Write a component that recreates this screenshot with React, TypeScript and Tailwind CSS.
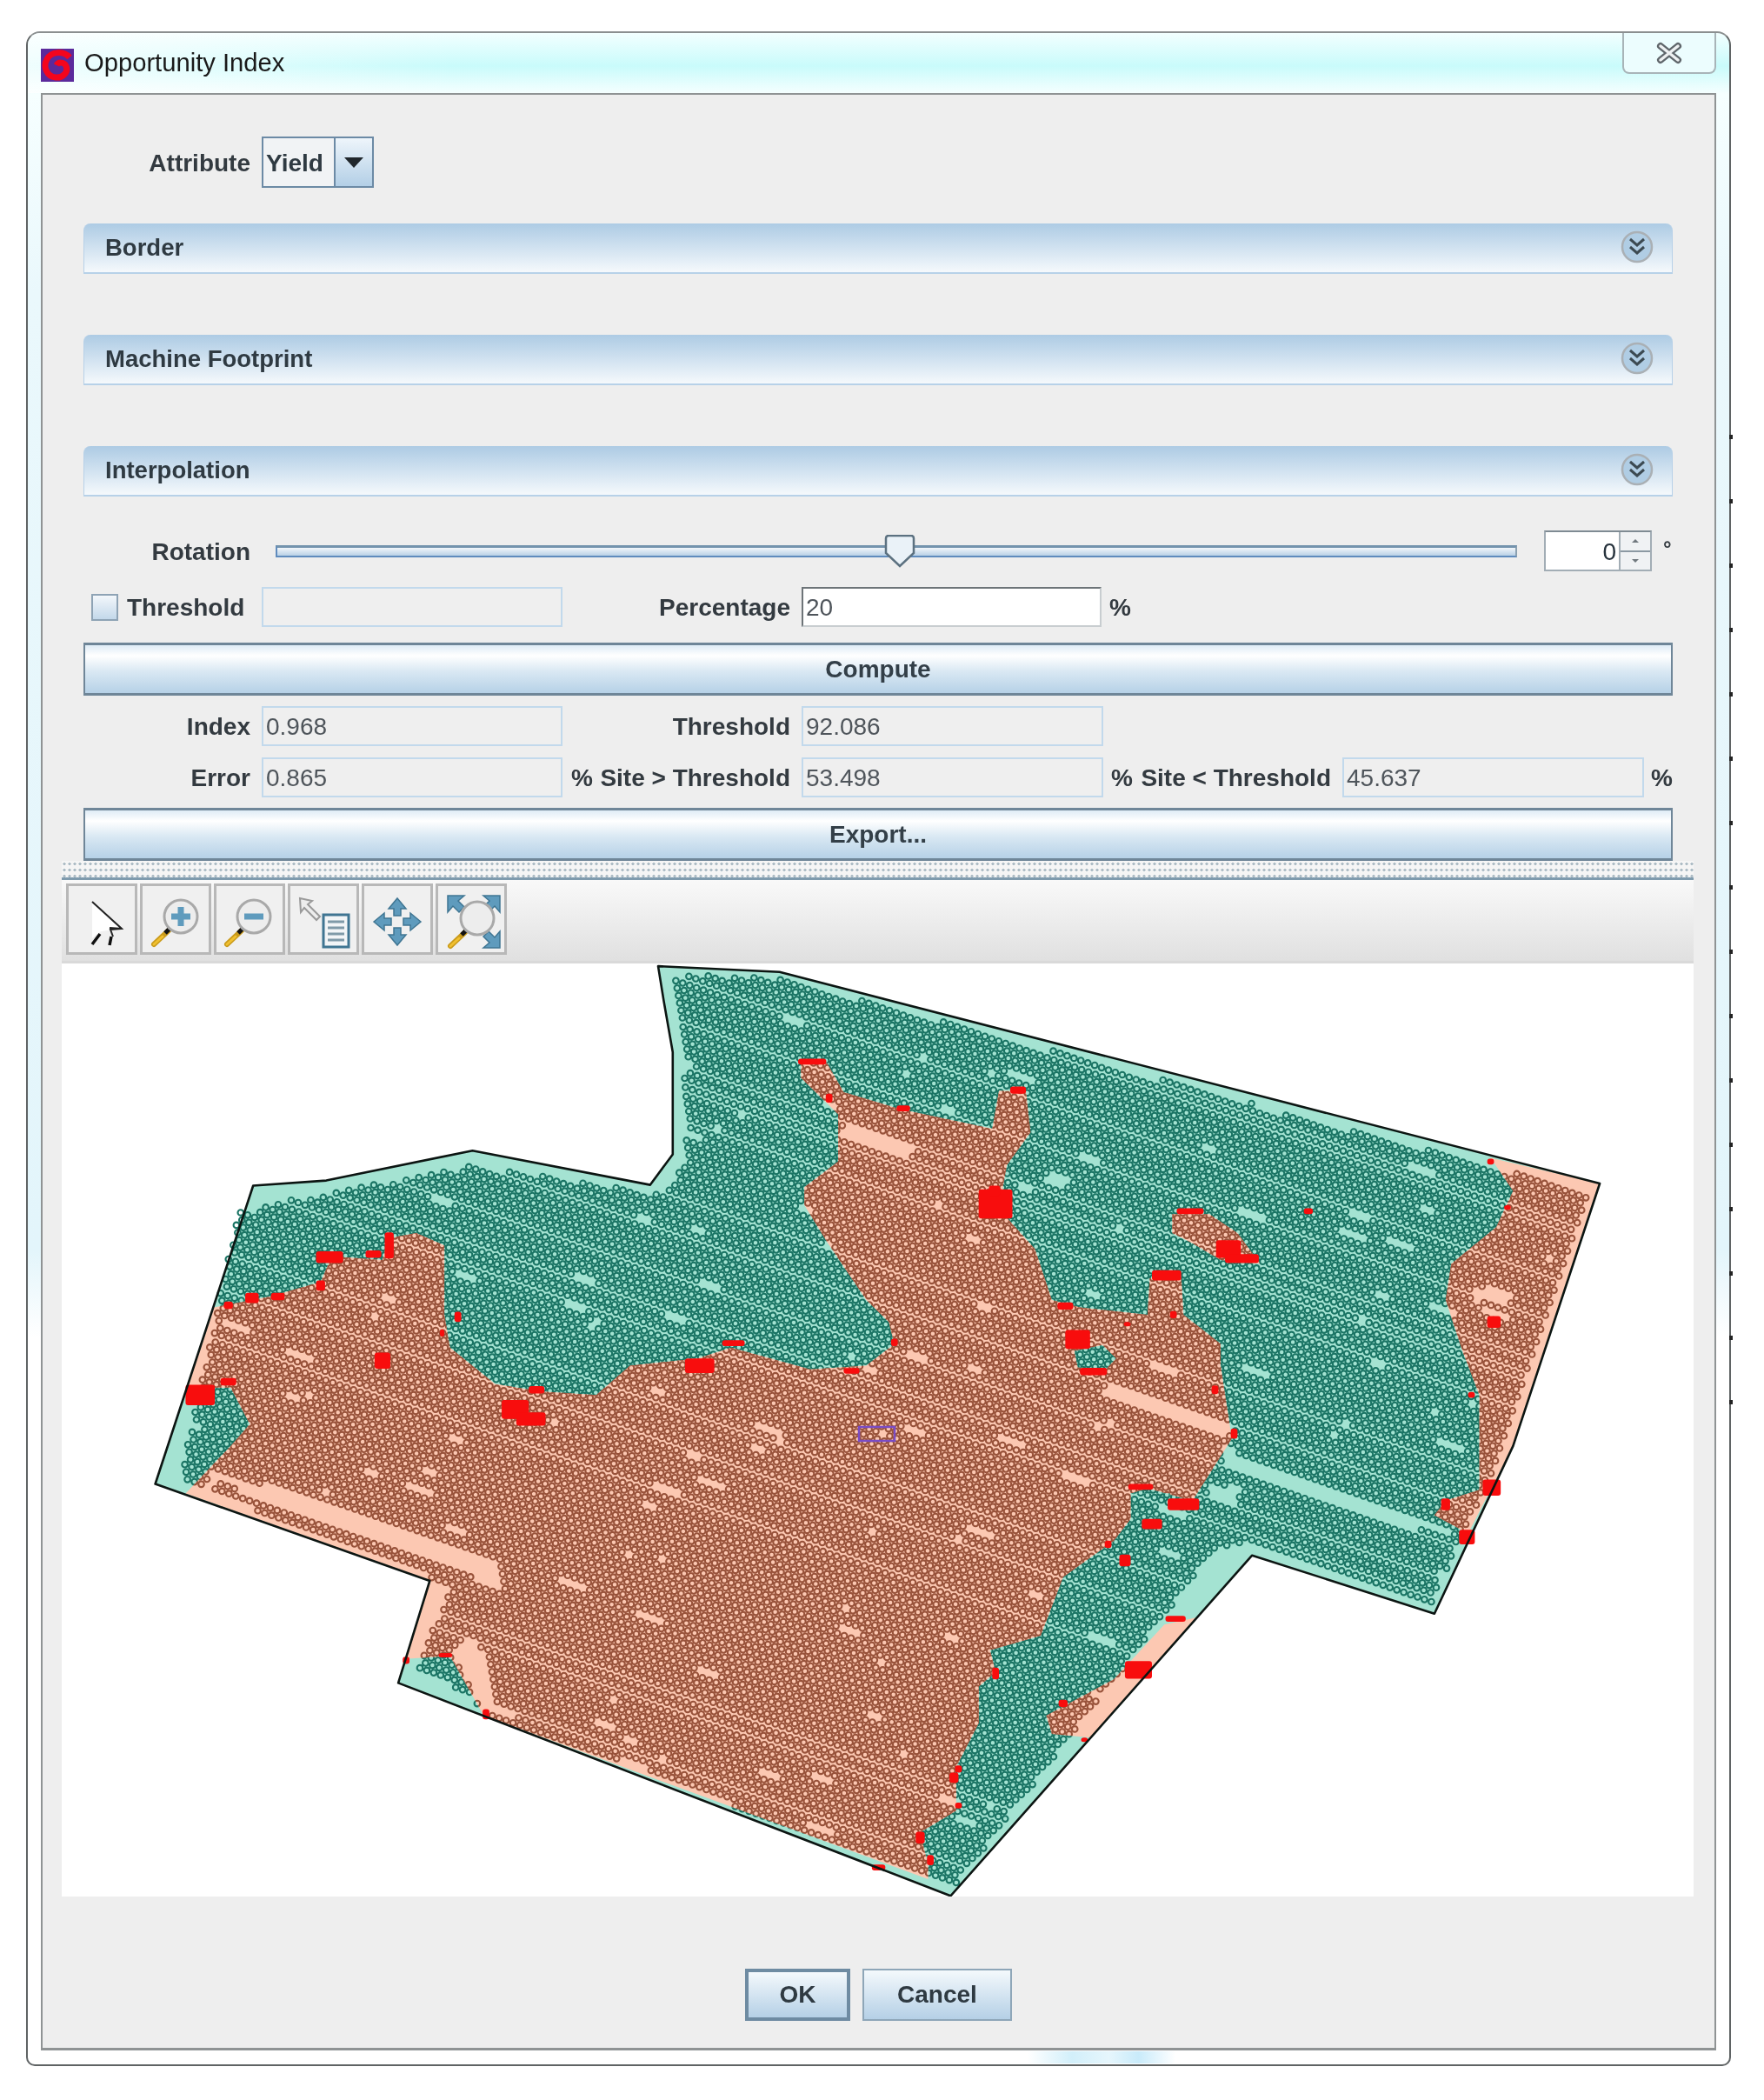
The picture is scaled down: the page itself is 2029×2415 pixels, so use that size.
import { ReactNode } from "react";

const FONT = "font-['Liberation_Sans',Arial,sans-serif]";

// map outlines are traced from the screenshot, Z converts them to page pixels
type Pt = number[];
const toPage = (p: Pt) => [p[0] * 1.294, 1100 + p[1] * 0.8386];
const Z = (pts: Pt[]) => pts.map(toPage).map((p) => `${p[0].toFixed(1)},${p[1].toFixed(1)}`).join(" ");

const FIELD: Pt[] = [[585, 12], [693, 20], [1422, 310], [1345, 670], [1275, 900], [1113, 820], [845, 1287], [354, 995], [382, 855], [138, 722], [225, 313], [290, 306], [420, 265], [578, 312], [598, 270], [598, 130], [590, 60]];
const INNER: Pt[] = [[600, 24], [690, 28], [1345, 295], [1414, 322], [1338, 665], [1272, 890], [1108, 805], [1080, 812], [848, 1275], [435, 1040], [410, 1005], [372, 975], [400, 860], [160, 718], [212, 345], [290, 325], [420, 285], [585, 325], [610, 285], [608, 130]];
const SALMON: Pt[][] = [
  [[430, 1040], [825, 1264], [825, 1245], [818, 1200], [850, 1170], [850, 1110], [870, 1050], [870, 1000], [885, 980], [880, 950], [925, 930], [945, 850], [990, 800], [1005, 770], [1005, 735], [1020, 728], [1060, 745], [1095, 660], [1085, 560], [1085, 530], [1052, 490], [1050, 440], [1022, 440], [1020, 490], [960, 480], [935, 470], [920, 400], [888, 345], [895, 285], [916, 240], [912, 183], [888, 183], [882, 235], [800, 208], [750, 185], [735, 145], [712, 143], [712, 165], [745, 215], [745, 280], [715, 315], [715, 340], [735, 390], [770, 470], [790, 500], [795, 530], [770, 560], [720, 565], [650, 535], [620, 550], [560, 560], [530, 600], [480, 595], [440, 585], [400, 535], [395, 490], [395, 395], [370, 378], [345, 385], [340, 415], [295, 410], [285, 445], [240, 465], [190, 480], [166, 590], [205, 590], [222, 640], [205, 670], [165, 735], [382, 855], [360, 962], [400, 958]],
  [[1325, 275], [1422, 310], [1345, 670], [1305, 790], [1275, 765], [1285, 745], [1315, 730], [1315, 600], [1300, 540], [1285, 470], [1290, 420], [1330, 370], [1345, 320]],
  [[1064, 905], [969, 1070], [935, 1065], [930, 1040], [990, 990], [1035, 915]],
  [[1042, 352], [1075, 352], [1100, 378], [1120, 420], [1085, 415], [1060, 392], [1042, 378]],
];
const ISLANDS: Pt[][] = [
  [[955, 540], [980, 532], [992, 550], [982, 566], [958, 562]],
  [[1005, 735], [1040, 735], [1036, 770], [1012, 762]],
];
// bare strips the harvester left, no dots in there
const BARE: Pt[][] = [
  [[755, 232], [815, 262], [808, 272], [750, 244]],
  [[985, 585], [1095, 640], [1088, 655], [980, 600]],
  [[190, 700], [440, 830], [450, 870], [420, 850], [185, 715]],
  [[400, 950], [425, 930], [440, 1030], [430, 1035]],
  [[1310, 450], [1345, 455], [1340, 475], [1310, 470]],
  [[1090, 680], [1290, 780], [1285, 795], [1085, 700]],
];
// red cells: centre x, centre y, w, h
const RED: number[][] = [[722, 143, 25, 8], [737, 193, 6, 12], [803, 207, 12, 8], [905, 182, 14, 10], [885, 338, 30, 40], [884, 320, 10, 14], [1058, 348, 24, 8], [1163, 348, 8, 8], [1092, 400, 22, 24], [1104, 413, 30, 12], [1037, 436, 26, 14], [947, 478, 14, 10], [1043, 490, 6, 10], [1002, 503, 6, 6], [958, 524, 22, 26], [972, 568, 24, 10], [1080, 593, 6, 12], [1097, 653, 6, 14], [1014, 726, 22, 8], [1052, 750, 28, 16], [1024, 777, 18, 14], [985, 805, 6, 10], [1000, 827, 10, 16], [1045, 907, 18, 8], [885, 982, 6, 16], [1012, 977, 24, 24], [945, 1023, 8, 10], [964, 1073, 6, 6], [852, 1113, 6, 10], [848, 1125, 8, 14], [852, 1163, 6, 8], [818, 1207, 8, 16], [827, 1238, 6, 14], [781, 1248, 12, 8], [432, 1038, 6, 14], [396, 957, 12, 6], [361, 964, 6, 10], [203, 477, 8, 10], [224, 467, 12, 14], [247, 465, 12, 10], [293, 411, 24, 16], [285, 450, 8, 14], [332, 407, 14, 10], [346, 395, 8, 36], [407, 493, 6, 14], [393, 515, 4, 10], [340, 553, 14, 22], [178, 600, 26, 28], [203, 582, 14, 10], [458, 620, 24, 26], [472, 633, 26, 18], [477, 593, 14, 10], [622, 560, 26, 20], [652, 529, 20, 8], [757, 567, 14, 8], [795, 528, 6, 10], [1325, 280, 6, 8], [1340, 343, 6, 6], [1328, 500, 12, 16], [1308, 600, 6, 8], [1326, 727, 16, 22], [1285, 750, 8, 16], [1304, 795, 14, 20]];

const inside = (x: number, y: number, poly: number[][]) => {
  let hit = false;
  for (let i = 0, j = poly.length - 1; i < poly.length; j = i++) {
    const [xi, yi] = poly[i];
    const [xj, yj] = poly[j];
    if (yi > y !== yj > y && x < ((xj - xi) * (y - yi)) / (yj - yi) + xi) hit = !hit;
  }
  return hit;
};

// harvest points: tilted rows with short gaps, seeded so it draws the same every time
const buildDots = () => {
  const inner = INNER.map(toPage);
  const bare = BARE.map((b) => b.map(toPage));
  let seed = 11;
  const rand = () => {
    seed = (seed * 16807) % 2147483647;
    return seed / 2147483647;
  };
  // small holes, bigger in the south east where the teal looks patchy
  const holes: number[][] = [];
  for (let i = 0; i < 110; i++) {
    const x = 200 + rand() * 1650;
    const y = 1110 + rand() * 1060;
    holes.push([x, y, 3 + rand() * (x > 1150 && y > 1700 ? 16 : 4)]);
  }
  const angle = (19 * Math.PI) / 180;
  const cos = Math.cos(angle);
  const sin = Math.sin(angle);
  let d = "";
  let v = -900;
  let row = 0;
  while (v < 900) {
    let skip = 0;
    const start = row % 2 ? 4.2 : 0;
    for (let u = -1100 + start; u < 1100; u += 8.4) {
      if (skip > 0) {
        skip--;
        continue;
      }
      if (rand() < 0.005) {
        skip = 1 + Math.floor(rand() * 3);
        continue;
      }
      const x = 1000 + u * cos - v * sin;
      const y = 1640 + u * sin + v * cos;
      if (!inside(x, y, inner)) continue;
      if (holes.some((h) => Math.abs(x - h[0]) < h[2] && Math.abs(y - h[1]) < h[2] * 0.6)) continue;
      if (bare.some((b) => inside(x, y, b))) continue;
      d += `M${(x - 3.3).toFixed(1)} ${y.toFixed(1)}a3.3 3.3 0 1 0 6.6 0a3.3 3.3 0 1 0-6.6 0`;
    }
    v += rand() < 0.12 ? 9.6 : 7.6;
    row++;
  }
  return d;
};
const DOTS = buildDots();

function FieldMap() {
  return (
    <svg viewBox="71 1107 1877 1073" className="block w-[1877px] h-[1073px] bg-white">
      <defs>
        <path id="dots" d={DOTS} />
        <clipPath id="salmon-clip">
          {SALMON.map((p, i) => (
            <polygon key={i} points={Z(p)} />
          ))}
        </clipPath>
        <clipPath id="island-clip">
          {ISLANDS.map((p, i) => (
            <polygon key={i} points={Z(p)} />
          ))}
        </clipPath>
      </defs>
      <polygon points={Z(FIELD)} fill="#a4e3d2" />
      <use href="#dots" fill="none" stroke="#1a7464" strokeWidth="2.1" />
      <g clipPath="url(#salmon-clip)">
        <polygon points={Z(FIELD)} fill="#fcc8b2" />
        <use href="#dots" fill="none" stroke="#98523a" strokeWidth="2.1" />
      </g>
      <g clipPath="url(#island-clip)">
        <polygon points={Z(FIELD)} fill="#a4e3d2" />
        <use href="#dots" fill="none" stroke="#1a7464" strokeWidth="2.1" />
      </g>
      {RED.map(([x, y, w, h], i) => {
        const [px, py] = toPage([x, y]);
        return <rect key={i} x={px - w * 0.65} y={py - h * 0.42} width={w * 1.294} height={h * 0.84} rx="3" fill="#f80d0d" />;
      })}
      <polygon points={Z(FIELD)} fill="none" stroke="#0c1512" strokeWidth="2.6" strokeLinejoin="round" />
      <rect x="988" y="1640" width="41" height="16" fill="none" stroke="#7a4cc4" strokeWidth="2.5" />
    </svg>
  );
}

function Label({ w, children, className = "" }: { w: string; children: ReactNode; className?: string }) {
  return <div className={`${w} shrink-0 pt-[2px] text-right text-[28px] leading-none font-bold text-[#333a40] ${className}`}>{children}</div>;
}

function ReadOnly({ w, value }: { w: string; value?: string }) {
  return (
    <div className={`${w} shrink-0 h-[46px] flex items-center pl-[3px] pt-[2px] border-2 border-[#c2d9ec] bg-[#efefef] text-[28px] leading-none text-[#4f555b]`}>
      {value}
    </div>
  );
}

function Section({ title }: { title: string }) {
  return (
    <div className="h-[58px] flex items-center justify-between pl-[24px] pr-[21px] rounded-t-[8px] border-b-2 border-x border-[#b7d1e8] bg-gradient-to-b from-[#adcbe4] to-[#f5f9fc]">
      <span className="text-[27.5px] leading-none font-bold text-[#2f3a42]">{title}</span>
      <svg viewBox="0 0 38 38" className="w-[38px] h-[38px] -mt-[2px]">
        <circle cx="19" cy="19" r="17" fill="#b0cde4" stroke="#aab0b5" strokeWidth="2.5" />
        <path d="M11 10l8 7 8-7M11 19l8 7 8-7" fill="none" stroke="#3c4a52" strokeWidth="3" />
      </svg>
    </div>
  );
}

function WideButton({ children }: { children: ReactNode }) {
  return (
    <div className="h-[61px] flex items-center justify-center border-2 border-t-[3px] border-b-[3px] border-[#6f8698] bg-[linear-gradient(to_bottom,#dfecf6,#ffffff_22%,#d9e8f3_55%,#b6d1e7)] text-[28px] leading-none font-bold text-[#333f48]">
      {children}
    </div>
  );
}

function ToolButton({ children }: { children: ReactNode }) {
  return (
    <div className="w-[82px] h-[82px] border-[3px] border-[#b8b8b8] bg-[#f0f0f0]">
      <svg viewBox="3 3 76 76" className="w-[76px] h-[76px]">
        {children}
      </svg>
    </div>
  );
}

const BLUE = "#5f9bbd";
const DARK_BLUE = "#3f7592";

function Lens({ cx, cy, children }: { cx: number; cy: number; children?: ReactNode }) {
  return (
    <g>
      <path d={`M${cx - 14} ${cy + 16}L${cx - 31} ${cy + 32}`} stroke="#c99a1a" strokeWidth="6" strokeLinecap="round" />
      <path d={`M${cx - 21} ${cy + 23}L${cx - 31} ${cy + 32}`} stroke="#f0c030" strokeWidth="3" strokeLinecap="round" />
      <path d={`M${cx - 13} ${cy + 14}L${cx - 18} ${cy + 19}`} stroke="#111" strokeWidth="5" />
      <circle cx={cx} cy={cy} r="19" fill="#ededed" stroke="#a9a9a9" strokeWidth="3" />
      {children}
    </g>
  );
}

function App() {
  return (
    <div className={`relative w-[2029px] h-[2415px] bg-white pt-[36px] pl-[30px] blur-[0.6px] ${FONT}`}>
      <div className="relative w-[1961px] h-[2340px] flex flex-col rounded-t-[16px] rounded-b-[10px] border-2 border-[#5f6364] border-t-[#8b8f90] bg-[linear-gradient(to_bottom,#f2ffff_0,#c9fbfb_38px,#f6ffff_70px,#eaf8fc_300px,#e3f5fb_1400px,#ffffff_1500px)]">
        {/* title bar */}
        <div className="h-[69px] shrink-0 relative flex items-center pl-[15px] rounded-tl-[14px] bg-gradient-to-r from-white/70 to-transparent to-[25%]">
          <svg viewBox="0 0 38 38" className="w-[38px] h-[38px] mt-[4px]">
            <rect width="38" height="38" fill="#5b2a9c" />
            <path d="M33 10C26 2 12 3 7 12c-5 9 0 20 10 21 8 1 15-6 12-13-2-5-9-5-11-1" fill="none" stroke="#f4051d" strokeWidth="7" />
          </svg>
          <span className="ml-[12px] text-[29.2px] leading-none text-[#1a1a1a]">Opportunity Index</span>
          <div className="absolute top-0 right-[15px] w-[108px] h-[47px] rounded-b-[8px] border-x-2 border-b-2 border-[#a8b4b8] bg-[#ecfdfe] flex items-center justify-center">
            <svg viewBox="0 0 34 26" className="w-[34px] h-[26px]">
              <path d="M7 5l20 16M27 5L7 21" stroke="#5f666b" strokeWidth="8" strokeLinecap="round" />
              <path d="M7 5l20 16M27 5L7 21" stroke="#eef1f2" strokeWidth="3.5" strokeLinecap="round" />
            </svg>
          </div>
        </div>

        {/* content panel */}
        <div className="flex-1 mx-[15px] mb-[16px] border-2 border-[#8f9394] border-b-[3px] bg-[#eeeeee] flex flex-col">
          <div className="pl-[47px] pr-[48px] flex flex-col">
            <div className="mt-[48px] h-[59px] flex items-center">
              <Label w="w-[192px]">Attribute</Label>
              <div className="ml-[13px] h-[59px] w-[129px] flex border-2 border-[#6c8aa5]">
                <div className="w-[81px] bg-[#f1f3f5] flex items-center pl-[3px] pt-[2px] text-[28px] leading-none font-bold text-[#2f3a42]">Yield</div>
                <div className="flex-1 border-l-2 border-[#6c8aa5] bg-gradient-to-b from-[#eef5fb] to-[#b3cfe6] flex items-center justify-center">
                  <div className="w-0 h-0 border-x-[11px] border-x-transparent border-t-[12px] border-t-[#20272c]" />
                </div>
              </div>
            </div>

            <div className="mt-[41px] flex flex-col gap-[70px]">
              <Section title="Border" />
              <Section title="Machine Footprint" />
              <Section title="Interpolation" />
            </div>

            {/* rotation */}
            <div className="mt-[39px] h-[47px] flex items-center">
              <Label w="w-[192px]">Rotation</Label>
              <div className="relative ml-[29px] w-[1428px] h-[14px] border-2 border-[#5f8bbd] border-r-[#8ba0b0] border-t-[3px] border-t-[#7393ad] bg-gradient-to-b from-[#f2f6fa] to-[#b9d1e6]">
                <svg viewBox="0 0 36 38" className="absolute left-[698px] -top-[15px] w-[36px] h-[38px]">
                  <path d="M2 4q0-3 3-3h26q3 0 3 3v17L18 36 2 21z" fill="#eaf2f8" stroke="#5c7180" strokeWidth="2.5" />
                </svg>
              </div>
              <div className="ml-[31px] w-[124px] h-[47px] flex border-2 border-[#a2adb5] border-t-[#7f8b93] bg-white">
                <div className="flex-1 flex items-center justify-end pr-[3px] pt-[2px] text-[28px] leading-none text-[#26323c]">0</div>
                <div className="w-[36px] flex flex-col border-l-2 border-[#a2adb5] bg-[#f0f2f4]">
                  <div className="flex-1 flex items-center justify-center border-b-2 border-[#8c99a3]">
                    <div className="w-0 h-0 border-x-[4px] border-x-transparent border-b-[4px] border-b-[#70787e]" />
                  </div>
                  <div className="flex-1 flex items-center justify-center">
                    <div className="w-0 h-0 border-x-[4px] border-x-transparent border-t-[4px] border-t-[#70787e]" />
                  </div>
                </div>
              </div>
              <div className="ml-[13px] -mt-[6px] text-[24px] leading-none font-bold text-[#333a40]">°</div>
            </div>

            {/* threshold */}
            <div className="mt-[18px] h-[46px] flex items-center">
              <div className="ml-[9px] w-[31px] h-[31px] border-2 border-[#8ea3b5] bg-gradient-to-b from-[#f3f7fb] to-[#c3d8ea]" />
              <Label w="w-[129px]" className="ml-[10px]">Threshold</Label>
              <div className="ml-[26px]">
                <ReadOnly w="w-[346px]" />
              </div>
              <Label w="w-[262px]">Percentage</Label>
              <div className="ml-[13px] w-[345px] h-[46px] flex items-center pl-[3px] pt-[2px] border-2 border-[#c8cdd0] border-t-[#6d7478] border-l-[#6d7478] bg-white text-[28px] leading-none text-[#4f555b]">20</div>
              <Label w="w-[34px]" className="text-[24px]">%</Label>
            </div>

            <div className="mt-[18px]">
              <WideButton>Compute</WideButton>
            </div>

            {/* results */}
            <div className="mt-[12px] h-[46px] flex items-center">
              <Label w="w-[192px]">Index</Label>
              <div className="ml-[13px]">
                <ReadOnly w="w-[346px]" value="0.968" />
              </div>
              <Label w="w-[262px]">Threshold</Label>
              <div className="ml-[13px]">
                <ReadOnly w="w-[347px]" value="92.086" />
              </div>
            </div>
            <div className="mt-[13px] h-[46px] flex items-center">
              <Label w="w-[192px]">Error</Label>
              <div className="ml-[13px]">
                <ReadOnly w="w-[346px]" value="0.865" />
              </div>
              <Label w="w-[35px]" className="text-[24px]">%</Label>
              <Label w="w-[227px]">Site &gt; Threshold</Label>
              <div className="ml-[13px]">
                <ReadOnly w="w-[347px]" value="53.498" />
              </div>
              <Label w="w-[34px]" className="text-[24px]">%</Label>
              <Label w="w-[228px]">Site &lt; Threshold</Label>
              <div className="ml-[13px]">
                <ReadOnly w="w-[347px]" value="45.637" />
              </div>
              <Label w="w-[33px]" className="text-[24px]">%</Label>
            </div>

            <div className="mt-[12px]">
              <WideButton>Export...</WideButton>
            </div>
          </div>

          {/* chart */}
          <div className="ml-[22px] mr-[24px] flex flex-col">
            <div className="h-[22px] border-b-[3px] border-[#7f9bae] bg-[#f5f5f5] bg-[radial-gradient(circle,#aebdc6_1.5px,transparent_1.6px)] bg-[length:6px_7px]" />
            <div className="h-[96px] pl-[5px] pt-[4px] flex gap-[3px] border-b-[3px] border-[#d9d9d9] bg-gradient-to-b from-[#f9f9f9] to-[#e0e0e0]">
              <ToolButton>
                <path d="M30 21v42l10-8 24-3z" fill="#fff" />
                <path d="M30 21l34 31-13 1 3 8M64 52l-14-1" fill="none" stroke="#222" strokeWidth="2" />
                <path d="M30 70l9-12M50 71l2-10" fill="none" stroke="#111" strokeWidth="3.5" />
              </ToolButton>
              <ToolButton>
                <Lens cx={47} cy={38}>
                  <path d="M47 27v22M36 38h22" stroke={BLUE} strokeWidth="7" />
                </Lens>
              </ToolButton>
              <ToolButton>
                <Lens cx={46} cy={38}>
                  <path d="M35 38h22" stroke={BLUE} strokeWidth="7" />
                </Lens>
              </ToolButton>
              <ToolButton>
                <path d="M14 17l14 3-5 4 14 14-4 4-14-14-4 5z" fill="#eee" stroke="#9a9a9a" strokeWidth="2" />
                <rect x="41" y="36" width="29" height="37" fill="#f2f5f7" stroke={DARK_BLUE} strokeWidth="3" />
                <path d="M46 44h19M46 51h19M46 58h19M46 65h19" stroke="#7f9aa8" strokeWidth="3" />
              </ToolButton>
              <ToolButton>
                <g fill={BLUE} stroke={DARK_BLUE} strokeWidth="1.5">
                  <path d="M41 17l10 12h-6v8h-8v-8h-6z" />
                  <path d="M41 71l10-12h-6v-8h-8v8h-6z" />
                  <path d="M14 44l12-10v6h8v8h-8v6z" />
                  <path d="M68 44l-12-10v6h-8v8h8v6z" />
                </g>
              </ToolButton>
              <ToolButton>
                <g fill={BLUE} stroke={DARK_BLUE} strokeWidth="1.5">
                  <path d="M14 14h19l-7 6 7 7-6 6-7-7-6 7z" />
                  <path d="M74 14v19l-6-7-7 7-6-6 7-7-7-6z" />
                  <path d="M74 74V55l-6 7-7-7-6 6 7 7-7 6z" />
                </g>
                <Lens cx={48} cy={40} />
              </ToolButton>
            </div>
            <FieldMap />
          </div>

          {/* dialog buttons */}
          <div className="mt-[83px] flex justify-center gap-[14px]">
            <div className="w-[121px] h-[60px] flex items-center justify-center border-[4px] border-[#6e8ba2] bg-gradient-to-b from-[#f4f9fc] to-[#b5d0e6] text-[28px] leading-none font-bold text-[#2f3a42]">OK</div>
            <div className="w-[172px] h-[60px] flex items-center justify-center border-2 border-[#8ea6b8] bg-gradient-to-b from-[#f4f9fc] to-[#b5d0e6] text-[28px] leading-none font-bold text-[#2f3a42]">Cancel</div>
          </div>
        </div>

        {/* the tinted glass patch showing through the bottom frame */}
        <div className="absolute left-[1150px] bottom-[1px] w-[170px] h-[14px] bg-[linear-gradient(to_right,transparent,#d2effa_30%,#e6f6fc_55%,#c9ebfa_75%,transparent)]" />
      </div>

      {/* specks of the window behind, along the right edge */}
      <div className="absolute left-[1989px] top-[500px] w-[4px] h-[1120px] bg-[repeating-linear-gradient(to_bottom,#222_0,#222_5px,transparent_5px,transparent_74px)]" />
    </div>
  );
}

export default App;
